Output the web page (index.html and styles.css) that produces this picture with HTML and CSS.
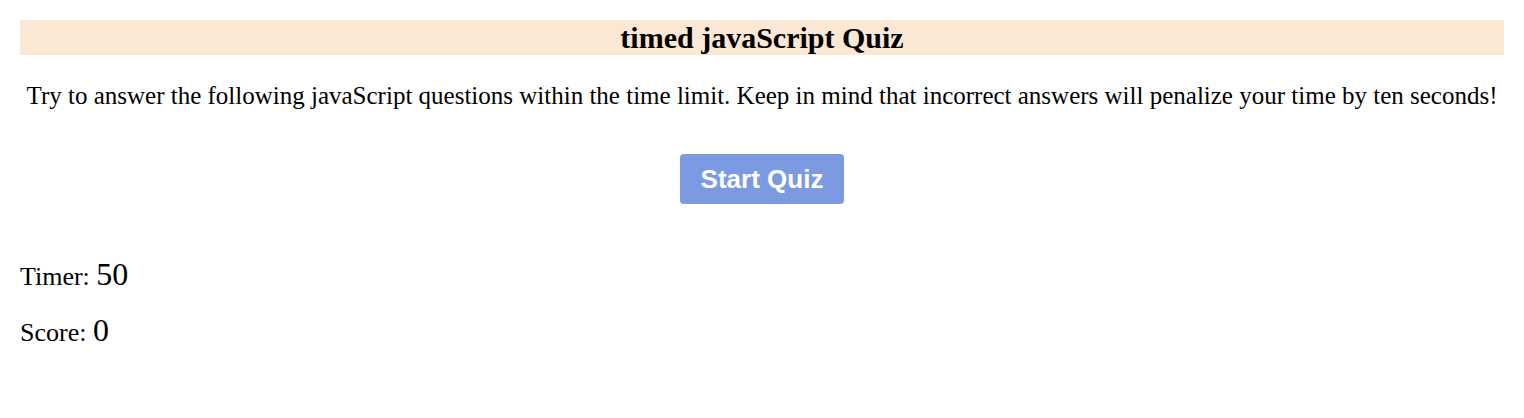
FILE: index.html
```html
<!DOCTYPE html>
<html>
<head>
<meta charset="utf-8">
<link rel="stylesheet" href="styles.css">
</head>
<body>
<header class="title-bar"><h1 class="title">timed javaScript Quiz</h1></header>
<p class="intro">Try to answer the following javaScript questions within the time limit. Keep in mind that incorrect answers will penalize your time by ten seconds!</p>
<div class="start-row"><button class="start-btn">Start Quiz</button></div>
<div class="stats">
  <div class="stat">Timer: <span class="stat-value">50</span></div>
  <div class="stat">Score: <span class="stat-value">0</span></div>
</div>
</body>
</html>
```
FILE: styles.css
```css
body {
  margin: 20px;
  font-family: "Liberation Serif", "Times New Roman", serif;
  color: #000;
  background: #fff;
}
.title-bar {
  background: #fae8d4;
  height: 35px;
  display: flex;
  align-items: center;
  justify-content: center;
}
.title {
  margin: 0;
  font-size: 30px;
  font-weight: bold;
}
.intro {
  margin: 26px 0 0;
  text-align: center;
  font-size: 25px;
  line-height: 30px;
}
.start-row {
  display: flex;
  justify-content: center;
  margin-top: 43px;
}
.start-btn {
  width: 164px;
  height: 50px;
  background: #7b9ae2;
  color: #fff;
  border: none;
  border-radius: 4px;
  font-family: "Liberation Sans", Arial, sans-serif;
  font-weight: bold;
  font-size: 26px;
  padding: 0;
}
.stats {
  margin-top: 52px;
  display: flex;
  flex-direction: column;
  gap: 20px;
}
.stat {
  font-size: 26px;
  line-height: 36px;
  height: 36px;
}
.stat-value {
  font-size: 32px;
}
```
